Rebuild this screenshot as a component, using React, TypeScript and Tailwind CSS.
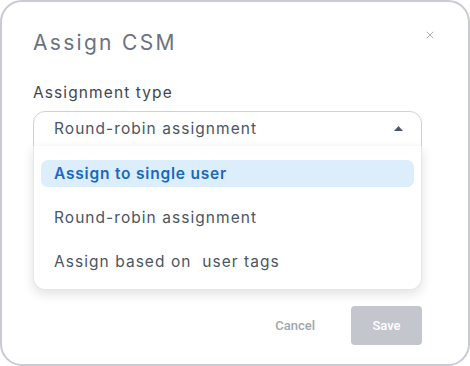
import { X } from 'lucide-react'

const options = ['Assign to single user', 'Round-robin assignment', 'Assign based on  user tags']

export default function App() {
  const selected = 0
  return (
    <div className="w-[470px] h-[366px] bg-white font-['Inter',sans-serif]">
      <div className="flex h-full flex-col rounded-[22px] border-2 border-[#c8cbd1] bg-white pl-[31px] pr-[46px] pt-[26px] pb-[19px]">
        <div className="flex items-start justify-between">
          <h2 className="text-[21px] leading-[30px] text-[#6b7280] tracking-[2.3px]">Assign CSM</h2>
          <button className="-mr-[14px] mt-[1px] text-[#9aa3ae]">
            <X className="h-[12px] w-[12px]" strokeWidth={1.75} />
          </button>
        </div>

        <label className="mt-[25px] block text-[15.5px] leading-[20px] text-[#3f4652] tracking-[1.1px]">Assignment type</label>

        <div className="relative mt-[8px]">
          <div className="flex h-[36px] items-center justify-between rounded-t-[12px] border border-[#cdd1d8] pl-[20px] pr-[16px] text-[15.5px] text-[#4b5563] tracking-[1.05px]">
            <span>Round-robin assignment</span>
            <svg width="9" height="5" viewBox="0 0 9 5" className="mr-[2px] mb-[2px]">
              <path d="M0 5 L4.5 0 L9 5 Z" fill="#4b5563" />
            </svg>
          </div>
          <ul className="absolute left-0 right-0 top-[35px] rounded-b-[12px] border border-t-0 border-[#e3e6ea] bg-white px-[7px] pt-[14px] pb-[14px] shadow-[0_4px_12px_rgba(0,0,0,0.12)]">
            {options.map((o, i) => (
              <li
                key={o}
                className={
                  i === selected
                    ? 'flex h-[27px] items-center rounded-[7px] bg-[#dcedfc] pl-[13px] text-[15.5px] font-semibold text-[#1769c0] tracking-[0.8px] whitespace-pre'
                    : 'mt-[17px] flex h-[27px] items-center pl-[13px] text-[15.5px] text-[#4b5563] tracking-[1.05px] whitespace-pre'
                }
              >
                {o}
              </li>
            ))}
          </ul>
        </div>

        <div className="mt-auto flex items-center justify-end gap-[36px] font-['Roboto',sans-serif]">
          <button className="text-[13px] font-medium text-[#a0a6b0]">Cancel</button>
          <button className="h-[39px] w-[71px] rounded-[4px] bg-[#c3c6cd] text-[13px] font-medium text-white">Save</button>
        </div>
      </div>
    </div>
  )
}
